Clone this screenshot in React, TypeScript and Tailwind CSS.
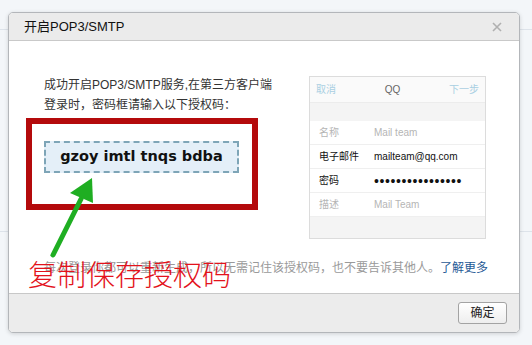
import React from 'react';

const rows = [
  { label: '名称', value: 'Mail team', dim: true },
  { label: '电子邮件', value: 'mailteam@qq.com', dim: false },
  { label: '密码', value: '••••••••••••••••', dim: false, dots: true },
  { label: '描述', value: 'Mail Team', dim: true },
];

const PhonePreview = () => {
  return (
    <div className="mt-[1px] w-[177px] h-[163px] border border-[#dcdcdc] flex flex-col bg-white">
      <div className="h-[26px] flex items-center justify-between px-[6px] bg-[#fafafa] border-b border-[#ececec] text-[10px]">
        <span className="text-[#a9cfe2]">取消</span>
        <span className="text-[#666]">QQ</span>
        <span className="text-[#a9cfe2]">下一步</span>
      </div>
      <div className="h-[18px] bg-[#f4f4f4]" />
      {rows.map((r) => (
        <div
          key={r.label}
          className="h-[24px] grid grid-cols-[55px_1fr] items-center pl-[9px] border-b border-[#efefef] text-[10px]"
        >
          <span className={r.dim ? 'text-[#b5b5b5]' : 'text-[#111]'}>{r.label}</span>
          <span
            className={
              r.dots
                ? 'text-[14px] leading-none tracking-[0.6px] text-[#111]'
                : r.dim
                ? 'text-[#b5b5b5]'
                : 'text-[#111]'
            }
          >
            {r.value}
          </span>
        </div>
      ))}
      <div className="flex-1 bg-[#f4f4f4]" />
    </div>
  );
};

const App = () => {
  return (
    <div className="relative w-[532px] h-[345px] bg-[#f3f6f9] overflow-hidden font-['Liberation_Sans','Noto_Sans_CJK_SC',sans-serif]">
      {/* page behind the modal */}
      <div className="h-[30px] border-b border-[#dde3ea]" />
      <div className="h-[202px] border-b border-[#dde3ea]" />

      {/* modal */}
      <div className="absolute left-[8px] top-[12px] w-[512px] h-[321px] flex flex-col border border-[#b3b6ba] rounded-[5px] bg-white shadow-[0_1px_4px_rgba(0,0,0,0.15)] overflow-hidden">
        <div className="h-[28px] flex items-center justify-between pl-[15px] pr-[17px] bg-[#ebebeb] border-b border-[#c9c9c9]">
          <span className="text-[13px] text-[#111]">开启POP3/SMTP</span>
          <svg width="10" height="10" viewBox="0 0 10 10">
            <path d="M1 1L9 9M9 1L1 9" stroke="#b0b0b0" strokeWidth="1.6" />
          </svg>
        </div>

        <div className="relative flex-1 flex flex-col pl-[35px] pt-[34px]">
          <div className="flex">
            <div className="w-[265px]">
              <p className="text-[12px] leading-[20px] text-[#333]">
                成功开启POP3/SMTP服务,在第三方客户端
                <br />
                登录时，密码框请输入以下授权码：
              </p>
              <div className="mt-[26px] w-[195px] h-[32px] flex items-center justify-center bg-[#e4eff8] border-2 border-dashed border-[#7ea5b7]">
                <span className="font-['DejaVu_Sans',sans-serif] font-bold text-[14.5px] text-[#111]">
                  gzoy imtl tnqs bdba
                </span>
              </div>
            </div>
            <PhonePreview />
          </div>

          <p className="mt-[19px] text-[12px] leading-[20px] text-[#9a9a9a]">
            每次登录你都可以重新生成，所以无需记住该授权码，也不要告诉其他人。
            <span className="text-[#1f5a96]">了解更多</span>
          </p>

          {/* annotations */}
          <div className="absolute left-[17px] top-[77px] w-[232px] h-[92px] border-[6px] border-[#b40a0c]" />
          <svg className="absolute left-[36px] top-[131px]" width="60" height="90" viewBox="0 0 60 90">
            <path d="M8 83L36 27" stroke="#1fae22" strokeWidth="5" strokeLinecap="round" />
            <path d="M47 6L25 21L48 31Z" fill="#1fae22" />
          </svg>
          <span className="absolute left-[19px] top-[217px] text-[29px] leading-[30px] text-[#e3121b] font-['Noto_Sans_CJK_SC',sans-serif] font-light whitespace-nowrap">
            复制保存授权码
          </span>
        </div>

        <div className="h-[39px] flex items-start justify-end pt-[8px] pr-[12px] bg-[#ececec] border-t border-[#c8c8c8]">
          <button className="w-[49px] h-[22px] rounded-[3px] border border-[#a3a3a3] bg-gradient-to-b from-white to-[#eeeeee] text-[12px] text-[#222]">
            确定
          </button>
        </div>
      </div>
    </div>
  );
};

export default App;
